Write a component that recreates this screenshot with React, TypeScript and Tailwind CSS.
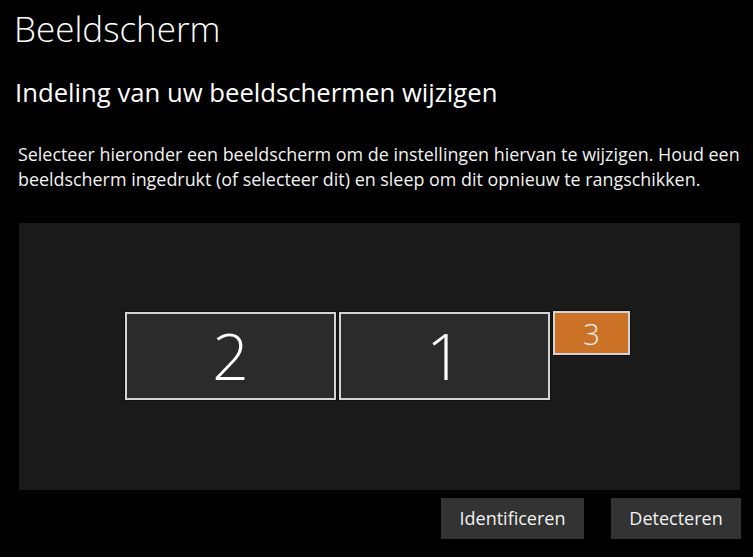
const font = { fontFamily: '"Open Sans", "Noto Sans", sans-serif' };

function Monitor({ label, big }: { label: string; big?: boolean }) {
  return big ? (
    <div className="flex h-[88px] w-[211px] items-center justify-center border-2 border-[#d4d4d4] bg-[#2b2b2b] shadow-[0_0_0_1px_#0f0f0f]">
      <span className="text-[64px] font-light leading-none text-white">{label}</span>
    </div>
  ) : (
    <div className="flex h-[44px] w-[77px] items-center justify-center border-2 border-[#d4d4d4] bg-[#cc7227] shadow-[0_0_0_1px_#0f0f0f]">
      <span className="text-[29px] font-light leading-none text-[#f3f3f3]">{label}</span>
    </div>
  );
}

export default function App() {
  return (
    <div
      className="flex h-[557px] w-[753px] flex-col overflow-hidden bg-black text-white"
      style={font}
    >
      <h1 className="ml-[14px] mt-[6px] text-[35px] font-light leading-[46px]">Beeldscherm</h1>
      <h2 className="ml-[15px] mt-[25px] text-[25.7px] font-normal leading-[32px]">
        Indeling van uw beeldschermen wijzigen
      </h2>
      <p className="ml-[18px] mt-[33px] w-[732px] text-[17.9px] leading-[25px] text-[#f2f2f2]">
        Selecteer hieronder een beeldscherm om de instellingen hiervan te wijzigen. Houd een
        beeldscherm ingedrukt (of selecteer dit) en sleep om dit opnieuw te rangschikken.
      </p>

      {/* Arrangement canvas */}
      <div className="ml-[19px] mt-[31px] flex h-[267px] w-[721px] items-start gap-[3px] bg-[#1a1a1a] pl-[106px] pt-[89px]">
        <Monitor label="2" big />
        <Monitor label="1" big />
        <div className="-mt-[1px]">
          <Monitor label="3" />
        </div>
      </div>

      <div className="mt-[8px] flex justify-end gap-[27px] pr-[12px]">
        <button className="h-[41px] w-[143px] bg-[#333333] text-[18px] text-[#f2f2f2]">
          Identificeren
        </button>
        <button className="h-[41px] w-[130px] bg-[#333333] text-[18px] text-[#f2f2f2]">
          Detecteren
        </button>
      </div>
    </div>
  );
}
